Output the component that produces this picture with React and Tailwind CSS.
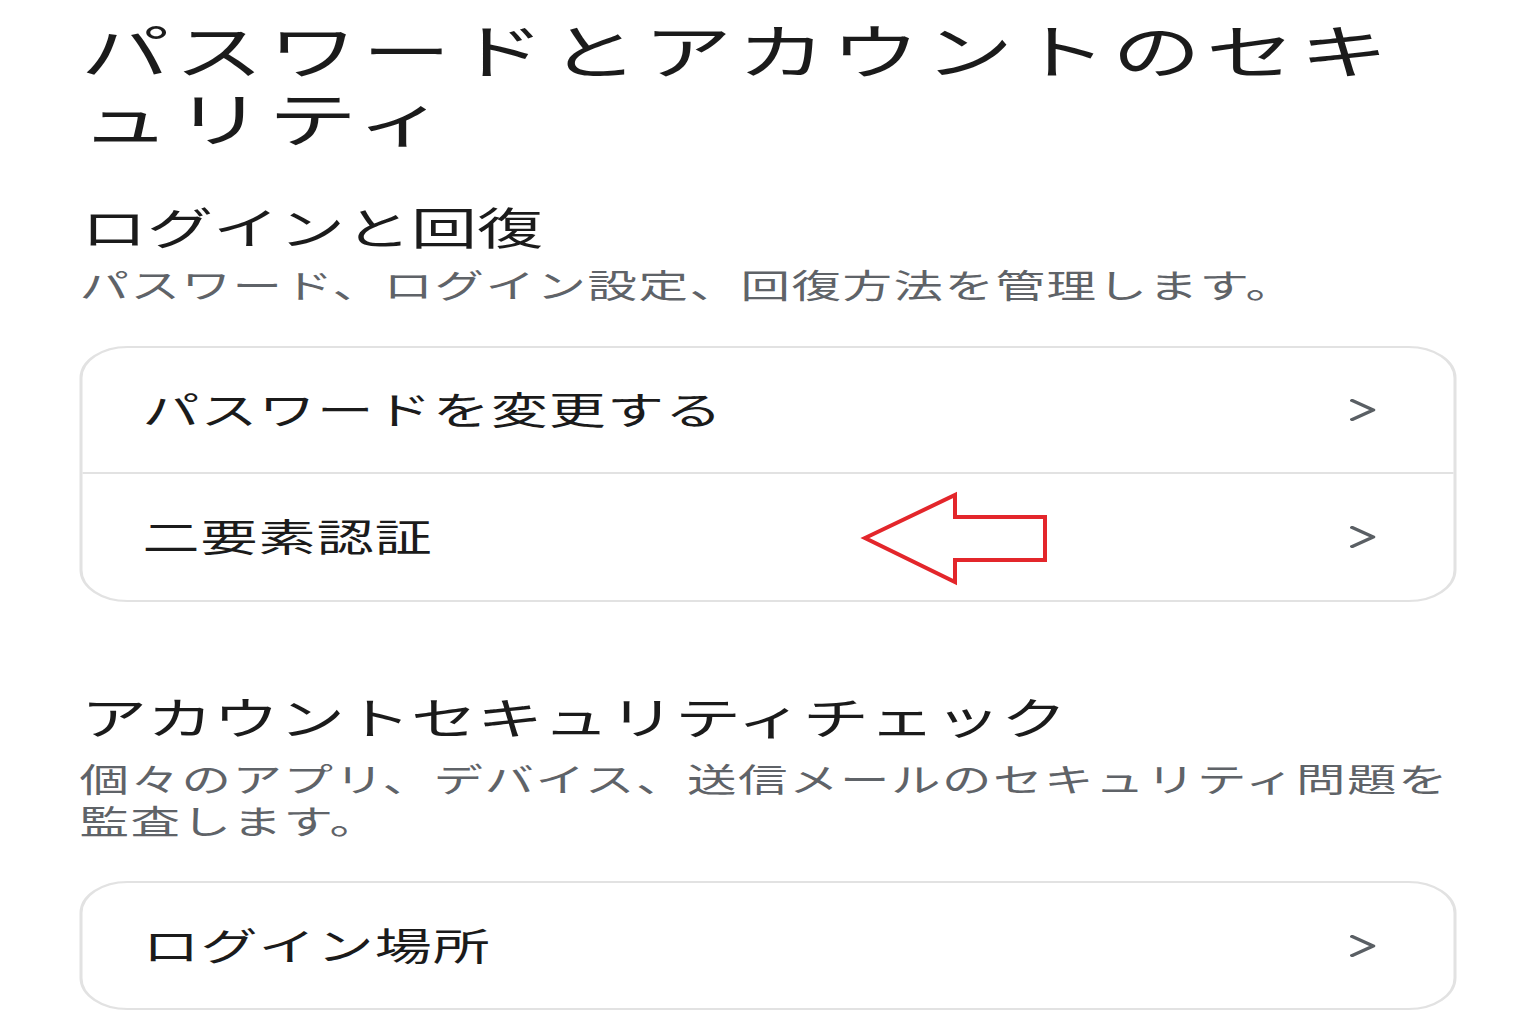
import React from "react";

function Chevron() {
  return (
    <svg width="17" height="22" viewBox="0 0 17 22" className="shrink-0">
      <polyline
        points="1.5,1.5 15.5,11 1.5,20.5"
        fill="none"
        stroke="#5a5f64"
        strokeWidth="3"
        strokeLinecap="round"
        strokeLinejoin="round"
      />
    </svg>
  );
}

function Row({ label, divider, tall }) {
  return (
    <div
      className={
        "flex items-center justify-between pl-[40px] pr-[52px] " +
        (tall ? "h-[126px] " : "h-[125px] ") +
        (divider ? "border-b-2 border-[#e2e2e2]" : "")
      }
    >
      <span className="mb-[4px] text-[38px] leading-[48px] tracking-[0.7px] text-[#1b1b1b]">{label}</span>
      <Chevron />
    </div>
  );
}

export default function App() {
  return (
    <div
      className="relative h-[1024px] w-[1536px] overflow-hidden bg-white"
      style={{ fontFamily: '"Noto Sans CJK JP", "Noto Sans", sans-serif' }}
    >
      <div className="w-[1024px] origin-top-left scale-x-150 px-[53px] pt-[15px]">
        <h1 className="pl-[1px] text-[59px] font-normal leading-[68px] tracking-[3.5px] text-[#1b1b1b]">
          パスワードとアカウントのセキュリティ
        </h1>

        <h2 className="mt-[47px] pl-[1px] text-[44px] font-normal leading-[56px] text-[#1b1b1b]">
          ログインと回復
        </h2>
        <p className="mt-[9px] text-[33px] leading-[42px] tracking-[1px] text-[#5f6368]">
          パスワード、ログイン設定、回復方法を管理します。
        </p>

        <div className="mt-[41px] rounded-[32px] border-2 border-[#e2e2e2]">
          <Row label="パスワードを変更する" divider tall />
          <Row label="二要素認証" tall />
        </div>

        <h2 className="mt-[86px] pl-[1px] text-[44px] font-normal leading-[56px] text-[#1b1b1b]">
          アカウントセキュリティチェック
        </h2>
        <p className="mt-[13px] text-[33px] leading-[42px] tracking-[1px] text-[#5f6368]">
          個々のアプリ、デバイス、送信メールのセキュリティ問題を監査します。
        </p>

        <div className="mt-[40px] rounded-[32px] border-2 border-[#e2e2e2]">
          <Row label="ログイン場所" />
        </div>
      </div>

      <svg
        className="absolute left-[858px] top-[488px]"
        width="192"
        height="98"
        viewBox="0 0 192 98"
      >
        <polygon
          points="7,50 97,7 97,29 187,29 187,72 97,72 97,94"
          fill="none"
          stroke="#e3262b"
          strokeWidth="4"
          strokeLinejoin="miter"
        />
      </svg>
    </div>
  );
}
